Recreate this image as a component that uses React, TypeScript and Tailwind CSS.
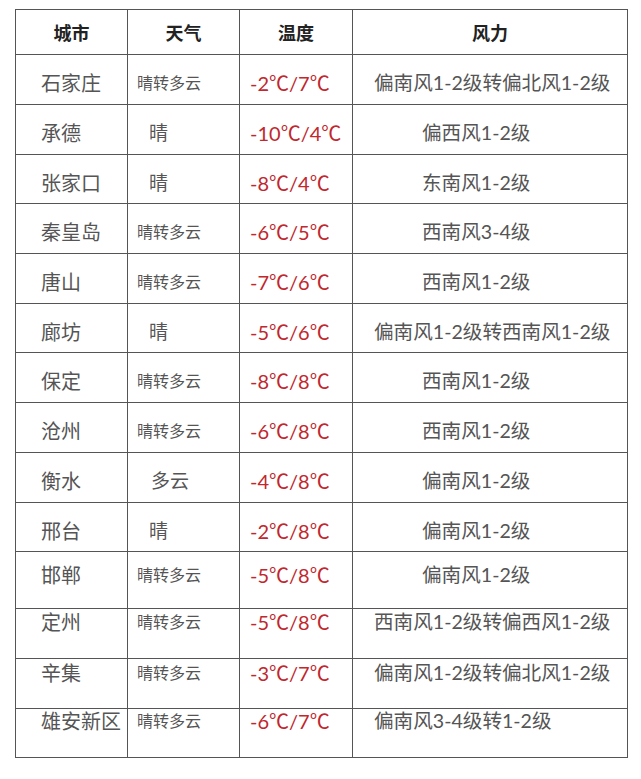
const rows = [
  { city: "石家庄", weather: "晴转多云", temp: "-2℃/7℃", wind: "偏南风1-2级转偏北风1-2级", h: "h-[50px]", pt: "pt-[16px]" },
  { city: "承德", weather: "晴", temp: "-10℃/4℃", wind: "偏西风1-2级", h: "h-[50px]", pt: "pt-[16px]" },
  { city: "张家口", weather: "晴", temp: "-8℃/4℃", wind: "东南风1-2级", h: "h-[49px]", pt: "pt-[16px]" },
  { city: "秦皇岛", weather: "晴转多云", temp: "-6℃/5℃", wind: "西南风3-4级", h: "h-[50px]", pt: "pt-[16px]" },
  { city: "唐山", weather: "晴转多云", temp: "-7℃/6℃", wind: "西南风1-2级", h: "h-[50px]", pt: "pt-[16px]" },
  { city: "廊坊", weather: "晴", temp: "-5℃/6℃", wind: "偏南风1-2级转西南风1-2级", h: "h-[49px]", pt: "pt-[16px]" },
  { city: "保定", weather: "晴转多云", temp: "-8℃/8℃", wind: "西南风1-2级", h: "h-[50px]", pt: "pt-[16px]" },
  { city: "沧州", weather: "晴转多云", temp: "-6℃/8℃", wind: "西南风1-2级", h: "h-[50px]", pt: "pt-[16px]" },
  { city: "衡水", weather: "多云", temp: "-4℃/8℃", wind: "偏南风1-2级", h: "h-[50px]", pt: "pt-[16px]" },
  { city: "邢台", weather: "晴", temp: "-2℃/8℃", wind: "偏南风1-2级", h: "h-[49px]", pt: "pt-[16px]" },
  { city: "邯郸", weather: "晴转多云", temp: "-5℃/8℃", wind: "偏南风1-2级", h: "h-[57px]", pt: "pt-[11px]" },
  { city: "定州", weather: "晴转多云", temp: "-5℃/8℃", wind: "西南风1-2级转偏西风1-2级", h: "h-[50px]", pt: "pt-[1px]" },
  { city: "辛集", weather: "晴转多云", temp: "-3℃/7℃", wind: "偏南风1-2级转偏北风1-2级", h: "h-[50px]", pt: "pt-[2px]" },
  { city: "雄安新区", weather: "晴转多云", temp: "-6℃/7℃", wind: "偏南风3-4级转1-2级", h: "h-[49px]", pt: "pt-[0px]" },
];

function weatherClass(w: string) {
  if (w === "晴转多云") return "pl-[9px] text-[16px]";
  if (w === "多云") return "pl-[23px] text-[19px]";
  return "pl-[21px] text-[19px]";
}

export default function App() {
  return (
    <div className="min-h-screen w-[641px] bg-white pt-[9px] pl-[15px] font-['Lato','Noto_Sans_CJK_SC',sans-serif] text-[#555]">
      <div className="w-[613px] border border-[#555]">
        <div className="grid h-[44px] grid-cols-[111px_112px_113px_275px] items-center text-[18px] font-semibold text-[#222] font-['Noto_Sans_CJK_SC',sans-serif]">
          <div className="text-center">城市</div>
          <div className="flex h-full items-center justify-center border-l border-[#555]">天气</div>
          <div className="flex h-full items-center justify-center border-l border-[#555]">温度</div>
          <div className="flex h-full items-center justify-center border-l border-[#555]">风力</div>
        </div>
        {rows.map((r) => {
          const long = r.wind.length > 8;
          return (
            <div key={r.city} className={`grid grid-cols-[111px_112px_113px_275px] border-t border-[#555] leading-[24px] ${r.h}`}>
              <div className={`pl-[25px] text-[20px] ${r.pt}`}>{r.city}</div>
              <div className={`border-l border-[#555] ${r.pt} ${weatherClass(r.weather)}`}>{r.weather}</div>
              <div className={`border-l border-[#555] pl-[10px] text-[20px] text-[#c1272d] ${r.pt}`}>{r.temp}</div>
              <div className={`whitespace-nowrap border-l border-[#555] text-[19.6px] ${r.pt} ${long ? "pl-[21px]" : "pl-[69px]"}`}>{r.wind}</div>
            </div>
          );
        })}
      </div>
    </div>
  );
}
